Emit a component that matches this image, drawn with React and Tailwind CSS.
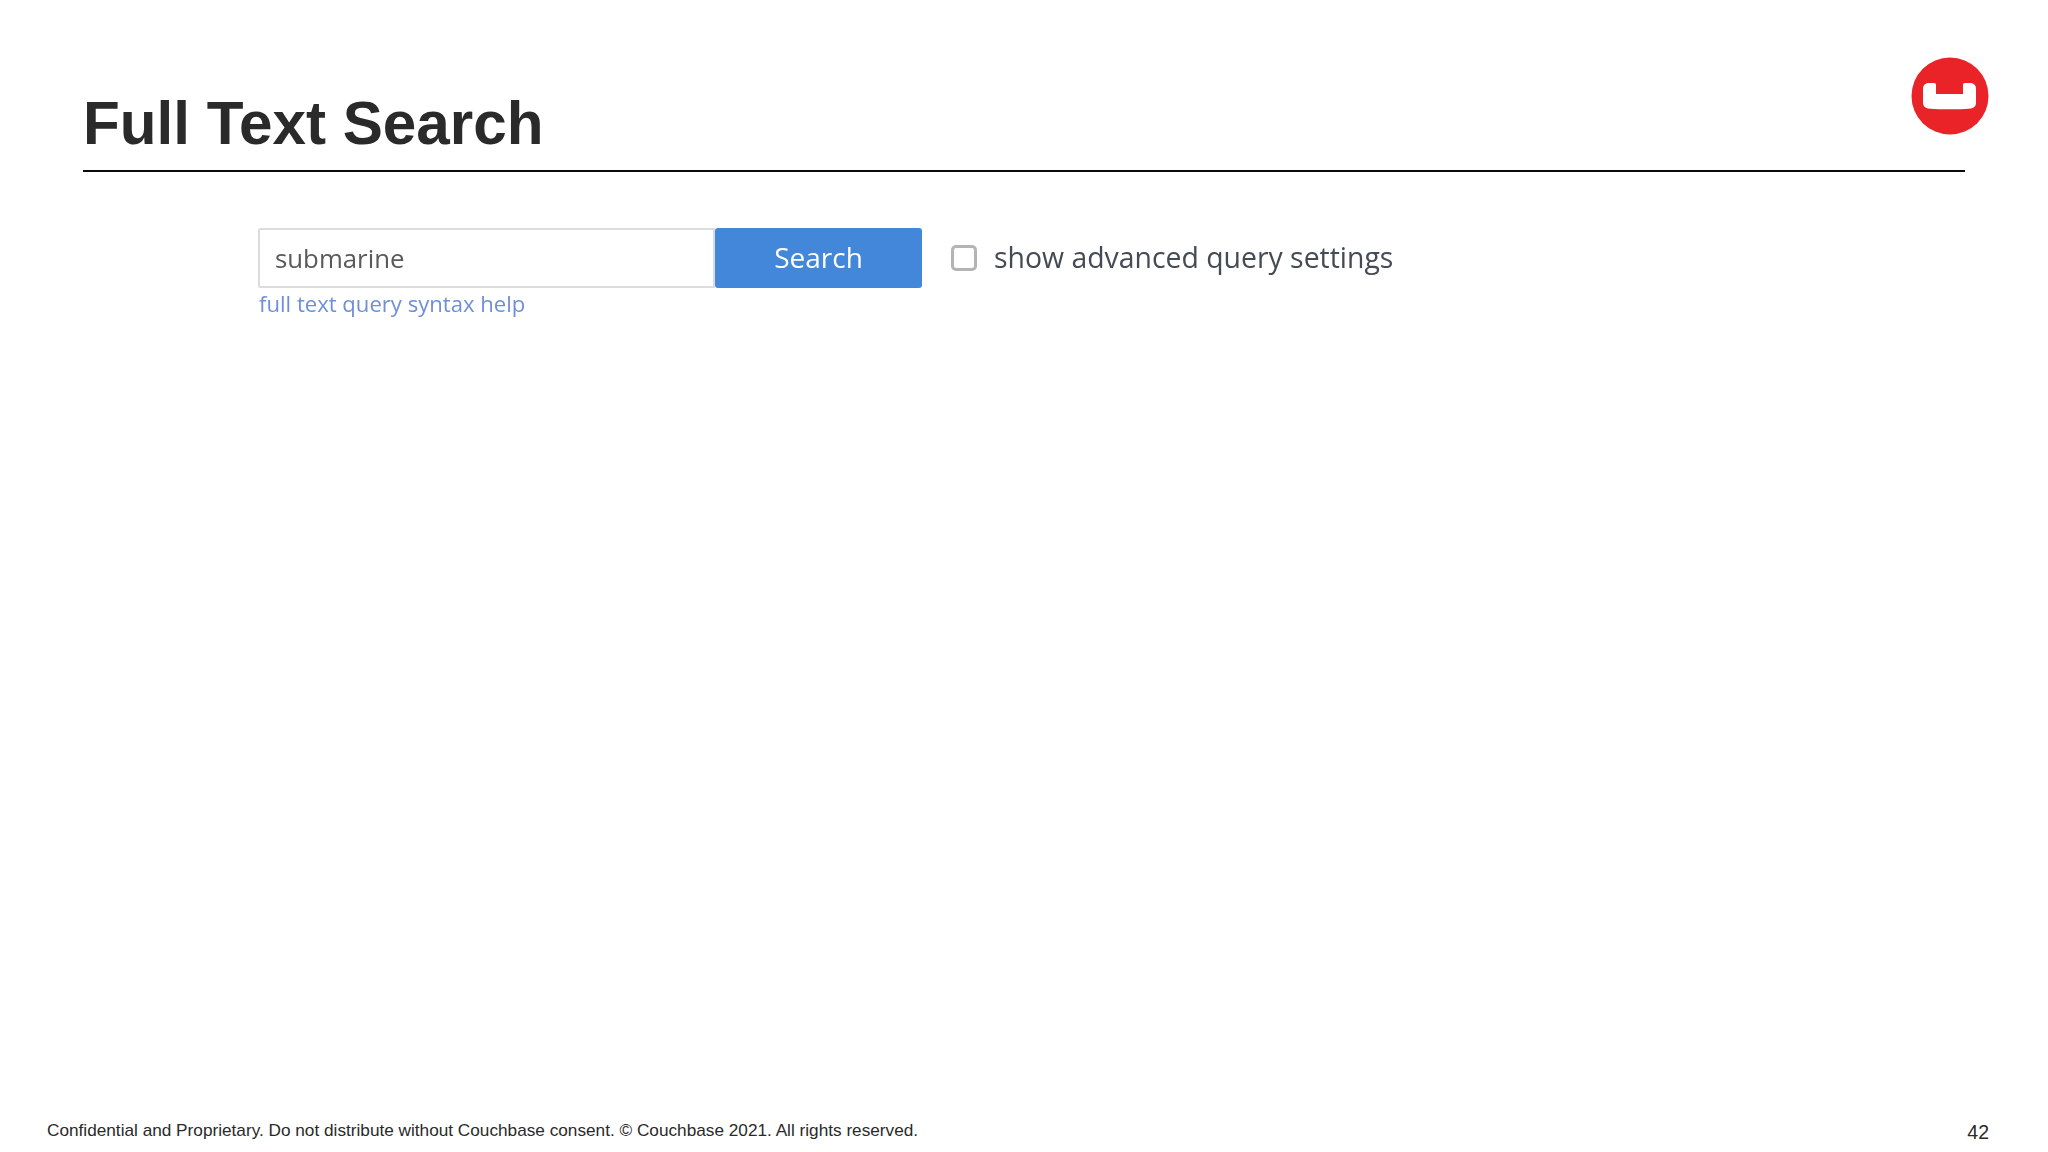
export default function App() {
  return (
    <div className="relative flex h-[1152px] w-[2048px] flex-col overflow-hidden bg-white font-['Liberation_Sans',Arial,sans-serif]">
      <header className="ml-[83px] mr-[83px] mt-[89px] border-b-2 border-[#0a0a0a] pb-[11px]">
        <h1 className="text-[60.2px] font-bold leading-[70px] text-[#2a2a2a]">Full Text Search</h1>
      </header>
      <svg className="absolute left-[1911px] top-[57px] h-[78px] w-[78px]" viewBox="0 0 78 78">
        <circle cx="39" cy="39" r="38.5" fill="#ea2328" />
        <path d="M12 32c0-3.500 2-6 6-6h5c1.500 0 2 .8 2 2v9h27v-9c0-1.200.5-2 2-2h5c4 0 6 2.500 6 6v14c0 3-2 5-5 5.400-16 1.200-27 1.200-43 0-3-.4-5-2.400-5-5.400z" fill="#ffffff" />
      </svg>
      <main className="ml-[258px] mt-[56px] flex flex-col font-['Open_Sans',sans-serif] blur-[0.7px]">
        <div className="flex items-center">
          <div className="flex h-[60px] w-[457px] items-center rounded-l-[2px] border-2 border-[#dcdcdc] pl-[15px] text-[25.8px] text-[#5a5a5a]">submarine</div>
          <button className="h-[60px] w-[207px] rounded-[3px] bg-[#4287d9] pb-[2px] text-[28px] text-white">Search</button>
          <span className="ml-[29px] h-[26px] w-[26px] rounded-[5px] border-[3px] border-[#b4b4b4] bg-white" />
          <span className="ml-[17px] pb-[2px] text-[28.4px] text-[#444b55]">show advanced query settings</span>
        </div>
        <a className="ml-[1px] text-[22.1px] leading-[30px] text-[#6f8fd8]">full text query syntax help</a>
      </main>
      <footer className="mt-auto mb-[10px] ml-[47px] mr-[32px] flex items-start justify-between text-[#2a2a2a]">
        <span className="text-[17.22px] leading-[20px]">Confidential and Proprietary. Do not distribute without Couchbase consent. © Couchbase 2021. All rights reserved.</span>
        <span className="mr-[27px] mt-[2px] text-[19.5px] leading-[20px]">42</span>
      </footer>
    </div>
  );
}
